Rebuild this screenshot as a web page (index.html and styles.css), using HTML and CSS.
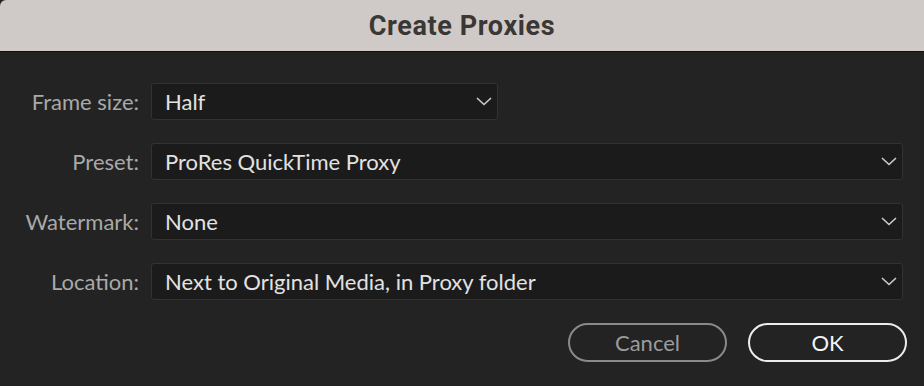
FILE: index.html
```html
<!DOCTYPE html>
<html>
<head>
    <title>Create Proxies</title>
    <link rel="stylesheet" href="styles.css">
</head>
<body>
    <div class="dialog">
        <div class="titlebar">Create Proxies</div>
        <div class="content">
            <div class="form">
                <label class="label">Frame size:</label>
                <div class="select short"><span>Half</span><svg class="chev" width="16" height="9" viewBox="0 0 16 9"><path d="M1.5 1.5 L8 7.5 L14.5 1.5" fill="none" stroke="#c8c8c8" stroke-width="1.7" stroke-linecap="round" stroke-linejoin="round"/></svg></div>

                <label class="label">Preset:</label>
                <div class="select"><span>ProRes QuickTime Proxy</span><svg class="chev" width="16" height="9" viewBox="0 0 16 9"><path d="M1.5 1.5 L8 7.5 L14.5 1.5" fill="none" stroke="#c8c8c8" stroke-width="1.7" stroke-linecap="round" stroke-linejoin="round"/></svg></div>

                <label class="label">Watermark:</label>
                <div class="select"><span>None</span><svg class="chev" width="16" height="9" viewBox="0 0 16 9"><path d="M1.5 1.5 L8 7.5 L14.5 1.5" fill="none" stroke="#c8c8c8" stroke-width="1.7" stroke-linecap="round" stroke-linejoin="round"/></svg></div>

                <label class="label">Location:</label>
                <div class="select"><span>Next to Original Media, in Proxy folder</span><svg class="chev" width="16" height="9" viewBox="0 0 16 9"><path d="M1.5 1.5 L8 7.5 L14.5 1.5" fill="none" stroke="#c8c8c8" stroke-width="1.7" stroke-linecap="round" stroke-linejoin="round"/></svg></div>
            </div>
            <div class="buttons">
                <button class="btn cancel">Cancel</button>
                <button class="btn ok">OK</button>
            </div>
        </div>
    </div>
</body>
</html>
```

FILE: styles.css
```css
body { margin: 0; background: #232323; font-family: Lato, "Open Sans", sans-serif; }
.dialog { width: 924px; height: 386px; background: #232323; overflow: hidden; }
.titlebar { height: 51px; background: #cfcac7; border-bottom: 1px solid #111; color: #3a3735; font-family: Roboto, sans-serif; font-weight: 700; font-size: 27px; display: flex; align-items: center; justify-content: center; letter-spacing: 0.6px; border-top-left-radius: 6px; }
.content { padding: 31px 21px 0 0; }
.form { display: grid; grid-template-columns: 139px 1fr; column-gap: 12px; row-gap: 23px; align-items: center; }
.label { text-align: right; color: #a9a9a9; font-size: 22px; }
.select { height: 35px; background: #1b1b1b; border: 1px solid #323232; border-radius: 3px; display: flex; align-items: center; justify-content: space-between; padding: 0 5px 0 13px; color: #e2e2e2; font-size: 22px; }
.select.short { width: 327px; }
.buttons { display: flex; justify-content: flex-end; gap: 21px; margin-top: 23px; margin-right: -4px; }
.btn { width: 159px; height: 39px; border-radius: 20px; background: transparent; font-family: Lato, sans-serif; font-size: 22px; }
.cancel { border: 2px solid #8a8a8a; color: #9c9c9c; }
.ok { border: 2px solid #ececec; color: #f4f4f4; }
```
